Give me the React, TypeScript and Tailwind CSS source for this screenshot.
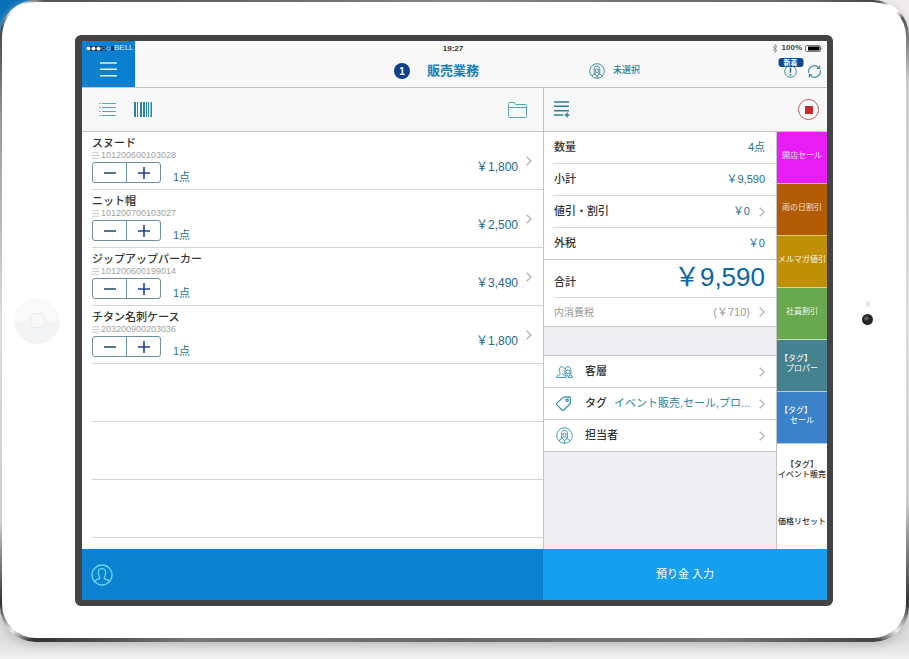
import type { ReactNode } from "react"

const items = [
  { name: "スヌード", code: "101200600103028", qty: "1点", price: "￥1,800" },
  { name: "ニット帽", code: "101200700103027", qty: "1点", price: "￥2,500" },
  { name: "ジップアップパーカー", code: "101200600199014", qty: "1点", price: "￥3,490" },
  { name: "チタン名刺ケース", code: "203200900203036", qty: "1点", price: "￥1,800" },
]

const emptyRows = [1, 2, 3]

const shortcuts = [
  { lines: ["開店セール"], color: "bg-[#e81cf5] text-white/80" },
  { lines: ["雨の日割引"], color: "bg-[#b35c06] text-white/80" },
  { lines: ["メルマガ値引"], color: "bg-[#bf9006] text-white/90" },
  { lines: ["社員割引"], color: "bg-[#68a84e] text-white/90" },
  { lines: ["【タグ】", "プロパー"], color: "bg-[#45818e] text-white", shift: true },
  { lines: ["【タグ】", "セール"], color: "bg-[#3b82c9] text-white", shift: true },
]

const plainShortcuts = [{ lines: ["【タグ】", "イベント販売"] }, { lines: ["価格リセット"] }]

function Chevron() {
  return (
    <svg className="h-3 w-[6px] shrink-0" viewBox="0 0 6 12" fill="none" stroke="#b4b4b8" strokeWidth="1.3">
      <path d="M.7 1.7 5 6 .7 10.3" />
    </svg>
  )
}

function PersonIcon({ className }: { className: string }) {
  return (
    <svg className={className} viewBox="0 0 22 22" fill="none" stroke="currentColor" strokeWidth="1.3">
      <circle cx="11" cy="11" r="10" />
      <path d="M3.5 17.5C4.300 15.800 6 15.500 7.700 14.900 8.900 14.500 9 13.900 8.600 13 7.600 11.800 7.300 10.400 7.300 8.800 7.300 6.200 8.700 4.700 11 4.700s3.700 1.500 3.700 4.100c0 1.600-.3 3-1.300 4.200-.4.9-.3 1.500.9 1.900 1.700.6 3.400.9 4.200 2.600" />
    </svg>
  )
}

function StaffIcon({ className }: { className: string }) {
  return (
    <svg className={className} viewBox="0 0 18 18" fill="none" stroke="currentColor" strokeWidth="1">
      <circle cx="9" cy="9" r="8.200" />
      <path d="M3.200 14.700c.4-1.400 1.800-1.700 3.600-2.300l.2-1.400M14.800 14.700c-.4-1.400-1.800-1.700-3.600-2.300L11 11" />
      <path d="M5.800 11.200C5.900 9.800 5.800 8.600 5.900 6.700 6 4.700 7.200 3.500 9 3.500s3 1.200 3.100 3.200c.1 1.900 0 3.100.1 4.500H11" />
      <path d="M5.800 11.200H7M7.300 7.300C7.200 9.500 7.900 11 9 11s1.800-1.500 1.700-3.700C9.700 7.300 9 7 8.600 6.400c-.3.500-.7.8-1.300.9ZM6.800 12.400 9 14.500l2.200-2.100M9 14.500V17" />
    </svg>
  )
}

function ListIcon() {
  return (
    <svg className="h-[13px] w-[17px]" viewBox="0 0 17 13" stroke="#5aa5ba" strokeWidth="1">
      <path d="M3 .5h14M3 4.500h14M3 8.500h14M3 12.500h14" />
      <path d="M0 .5h1.500M0 4.500h1.500M0 8.500h1.500M0 12.500h1.500" />
    </svg>
  )
}

function BarcodeIcon() {
  return (
    <svg className="h-[15px] w-[18px]" viewBox="0 0 18 15" fill="#2785a5">
      <path d="M0 0h2v15H0zM3 0h1v15H3zM6 0h2v15H6zM9 0h2v15H9zM12 0h1v15h-1zM14 0h1v15h-1zM16.500 0h1.500v15h-1.500z" />
    </svg>
  )
}

function FolderIcon() {
  return (
    <svg className="h-4 w-[19px]" viewBox="0 0 19 16" fill="none" stroke="#5d9fb3" strokeWidth="1">
      <path d="M.5 14V1.500c0-.6.4-1 1-1h4.700l1.300 2h9.500c.9 0 1.500.6 1.500 1.500v10c0 .8-.5 1.500-1.300 1.500H1.800C1 15.500.5 14.800.5 14ZM.5 5.500h18" />
    </svg>
  )
}

function ListPlusIcon() {
  return (
    <svg className="h-[17px] w-4" viewBox="0 0 16 17" fill="none" stroke="#2d7f98" strokeWidth="1.400">
      <path d="M0 1h15M0 5.300h15M0 9.700h15M0 14h9M10.500 14h5M13 11.500v5" />
    </svg>
  )
}

function BatteryStatus() {
  return (
    <div className="flex h-[14px] items-center justify-end text-[8px] font-bold text-[#444]">
      <svg className="mr-1 h-[9px] w-[6px]" viewBox="0 0 6 9" fill="none" stroke="#777" strokeWidth=".8">
        <path d="m.8 2.500 4.200 4L3 8.400V.6l2 1.900-4.200 4" />
      </svg>
      100%
      <svg className="ml-[3px] h-[7px] w-[18px]" viewBox="0 0 18 7">
        <rect x=".5" y=".5" width="15" height="6" rx="1.500" fill="none" stroke="#777" />
        <rect x="3" y="1.500" width="11.500" height="4" fill="#000" />
        <path d="M16.500 2.500c1 .2 1 1.800 0 2z" fill="#777" />
      </svg>
    </div>
  )
}

function Header() {
  return (
    <header className="flex h-[47px] border-b border-[#c4c4c6] bg-[#f8f8f8]">
      <div className="flex w-[53px] flex-col bg-[#0a7fd0]">
        <div className="flex h-[14px] items-center pl-1 text-[8px] text-[#d6ecfa]">
          <svg className="h-[7px] w-7" viewBox="0 0 28 7">
            <path d="M1 1h19v5H1z" fill="#0b3158" />
            <g fill="#fff">
              <circle cx="2.500" cy="3.500" r="2" />
              <circle cx="7.500" cy="3.500" r="2" />
              <circle cx="12.500" cy="3.500" r="2" />
            </g>
            <g fill="none" stroke="#8cc4ec" strokeWidth=".7">
              <circle cx="17.500" cy="3.500" r="1.700" />
              <circle cx="22.500" cy="3.500" r="1.700" />
            </g>
            <path d="M25 1h3v5h-3z" fill="#0b3158" />
          </svg>
          BELL
        </div>
        <button aria-label="メニュー" className="flex flex-1 items-center justify-center pb-[3px]">
          <svg className="h-[15px] w-[17px]" viewBox="0 0 17 15" stroke="#e3f4ff" strokeWidth="1.400">
            <path d="M0 1h17M0 7.300h17M0 13.700h17" />
          </svg>
        </button>
      </div>

      <div className="flex-1">
        <div className="h-[14px] text-center text-[8px] leading-[16px] font-bold text-[#333]">19:27</div>
        <div className="grid h-8 grid-cols-[1fr_auto_1fr] items-center">
          <span className="mr-[17px] flex size-4 items-center justify-center justify-self-end rounded-full bg-[#0d3f8a] text-[10px] font-bold text-white">
            1
          </span>
          <h1 className="text-[13px] font-bold text-[#1b7fb8]">販売業務</h1>
          <button className="ml-[110px] flex items-center gap-2 justify-self-start text-[9px] font-medium text-[#2a7f9c]">
            <StaffIcon className="size-4" />
            未選択
          </button>
        </div>
      </div>

      <div className="w-[56px] pr-1">
        <BatteryStatus />
        <div className="flex h-8 items-center justify-end gap-[11px] pr-[2px] text-[#3590a8]">
          <button aria-label="お知らせ" className="relative">
            <svg className="size-[13px]" viewBox="0 0 13 13" fill="none" stroke="currentColor">
              <circle cx="6.500" cy="6.500" r="5.800" />
              <path d="M6.500 2.800v5M6.500 8.900v1.500" stroke="#1c6f9a" strokeWidth="1.500" />
            </svg>
            <span className="absolute bottom-[11px] left-1/2 h-[9px] w-[25px] -translate-x-1/2 rounded-[3px] bg-[#15478c] text-center text-[7px] leading-[9px] font-bold text-white">
              新着
            </span>
          </button>
          <button aria-label="更新">
            <svg className="size-[13px]" viewBox="0 0 13 13" fill="none" stroke="currentColor" strokeWidth="1.100">
              <path d="M1 8.200A5.700 5.700 0 0 1 10.800 2.800M12 4.800a5.700 5.700 0 0 1-9.800 5.400" />
              <path d="M11.700.6v2.800H8.900M1.300 12.400V9.600h2.800" />
            </svg>
          </button>
        </div>
      </div>
    </header>
  )
}

function ItemRow({ item }: { item: (typeof items)[number] }) {
  return (
    <li className="flex h-[58px] justify-between border-b border-[#d5d5d5] pr-[11px]">
      <div className="pt-[5px]">
        <h2 className="text-[11px] leading-3 font-medium text-[#333]">{item.name}</h2>
        <p className="flex items-center gap-[2px] text-[9px] leading-3 text-[#a3a3a3]">
          <svg className="h-[7px] w-[7px]" viewBox="0 0 7 7" stroke="#bbb" strokeWidth=".8">
            <path d="M0 .8h7M0 3.500h7M0 6.200h7" />
          </svg>
          {item.code}
        </p>
        <div className="mt-px flex">
          <div className="flex h-[21px] w-[69px] divide-x divide-[#6d93a6] rounded-[3px] border border-[#6d8ea0]">
            <button aria-label={`${item.name}を減らす`} className="flex flex-1 items-center justify-center">
              <svg className="size-3" viewBox="0 0 12 12" stroke="#2b5468" strokeWidth="1.600">
                <path d="M0 6h12" />
              </svg>
            </button>
            <button aria-label={`${item.name}を増やす`} className="flex flex-1 items-center justify-center">
              <svg className="size-3" viewBox="0 0 12 12" stroke="#1c4690" strokeWidth="1.600">
                <path d="M0 6h12M6 0v12" />
              </svg>
            </button>
          </div>
          <span className="ml-3 pt-[7px] text-[11px] leading-4 text-[#2d7390]">{item.qty}</span>
        </div>
      </div>
      <button className="flex items-center gap-2 text-[12px] text-[#236a8e]">
        <span className="pt-3">{item.price}</span>
        <Chevron />
      </button>
    </li>
  )
}

function SummaryRow({ label, value, line, chevron }: { label: string; value: string; line: string; chevron?: boolean }) {
  return (
    <div className={`flex h-8 items-center border-b pr-[11px] text-[11px] ${line}`}>
      <dt className="flex-1 font-medium text-[#333]">{label}</dt>
      <dd className="flex items-center gap-[9px] text-[#2a6f8e]">
        {value}
        {chevron && <Chevron />}
      </dd>
    </div>
  )
}

function OptionRow({ icon, label, value }: { icon: ReactNode; label: string; value?: string }) {
  return (
    <button className="flex h-8 w-full items-center border-b border-[#c8c8cc] bg-white pr-[11px] pl-3 text-left text-[11px]">
      <span className="w-[29px] text-[#3590ae]">{icon}</span>
      <span className="font-medium text-[#333]">{label}</span>
      <span className="flex-1 pl-[7px] whitespace-nowrap text-[#2f84a3]">{value}</span>
      <Chevron />
    </button>
  )
}

function Summary() {
  return (
    <section className="flex flex-1 flex-col bg-[#eeeef2]">
      <dl className="border-b border-[#c8c8cc] bg-white">
        <div className="pl-[10px]">
          <SummaryRow label="数量" value="4点" line="border-[#d5d5d5]" />
          <SummaryRow label="小計" value="￥9,590" line="border-[#d5d5d5]" />
          <SummaryRow label="値引・割引" value="￥0" line="border-[#d5d5d5]" chevron />
        </div>
        <div className="border-b border-[#c4c4c6] pl-[10px]">
          <SummaryRow label="外税" value="￥0" line="border-transparent -mb-px" />
        </div>
        <div className="pl-[10px]">
          <div className="flex h-[38px] items-center justify-between border-b border-[#d5d5d5] pr-[11px]">
            <dt className="pt-2 text-[11px] font-medium text-[#333]">合計</dt>
            <dd className="pb-[3px] text-[26px] leading-8 text-[#0c66a6]">￥9,590</dd>
          </div>
          <div className="flex h-7 items-center justify-between pr-[11px] text-[#999]">
            <dt className="text-[10px]">内消費税</dt>
            <dd className="flex items-center gap-[9px] text-[11px]">
              (￥710)
              <Chevron />
            </dd>
          </div>
        </div>
      </dl>

      <div className="mt-7 border-t border-[#c8c8cc]">
        <OptionRow
          label="客層"
          icon={
            <svg className="h-3 w-[17px]" viewBox="0 0 17 12" fill="none" stroke="currentColor">
              <path d="M.6 11.400c0-1.900 1.400-2.200 3-2.700.9-.3.900-.9.500-1.400C2.700 5.400 2.800.8 5.800.7c1.300 0 2.200.8 2.500 1.800M.6 11.400h9.600c0-1.900-1.400-2.200-3-2.700-.7-.3-.8-.8-.4-1.400" />
              <path d="M16.400 11.400h-4c0-1.900-1.100-2.300-2.800-2.800M16.400 11.400c0-1.800-1-2.200-2.500-2.600V7.500h1.200c-.4-2.300.5-6.700-3-6.800-3.200-.1-3.100 3.900-3.300 6.800H10v1.100M9.900 4.500c1 0 1.800-.4 2.200-1 .3.600.8.9 1.500 1M13.600 4.500c0 1.500-.5 3-1.700 3s-1.800-1-1.900-2.200M11 9.200l1.200 1.300 1.700-1.500" />
            </svg>
          }
        />
        <OptionRow
          label="タグ"
          value="イベント販売,セール,プロ..."
          icon={
            <svg className="size-[15px]" viewBox="0 0 15 15" fill="none" stroke="currentColor" strokeWidth="1.200">
              <path d="M8 1.200 13.200.9c.6 0 .9.3 1 .9l.2 5c0 .5-.2.9-.5 1.200l-6 6c-.6.600-1.400.5-1.900 0L1 8.900c-.5-.6-.5-1.300 0-1.800l5.900-5.500c.3-.3.700-.4 1.100-.4Z" />
              <circle cx="11" cy="4.300" r="1.200" />
            </svg>
          }
        />
        <OptionRow label="担当者" icon={<StaffIcon className="size-[17px]" />} />
      </div>
    </section>
  )
}

function Shortcuts() {
  return (
    <nav className="w-[51px] border-l border-[#c4c4c6] bg-white text-[8px] leading-[10px] whitespace-nowrap">
      {shortcuts.map((s, i) => (
        <button key={i} className={`flex h-[52px] w-full flex-col items-center justify-center border-b border-white/60 pb-1 ${s.color}`}>
          <span className={s.shift ? "pr-3" : ""}>{s.lines[0]}</span>
          {s.lines[1] && <span>{s.lines[1]}</span>}
        </button>
      ))}
      {plainShortcuts.map((s, i) => (
        <button key={i} className="flex h-[52px] w-full flex-col items-center justify-center font-medium text-[#333]">
          {s.lines.map((line) => (
            <span key={line}>{line}</span>
          ))}
        </button>
      ))}
    </nav>
  )
}

export default function App() {
  return (
    <div className="min-h-screen bg-[linear-gradient(to_right,#0870b8_0,#0870b8_60px,transparent_60px),linear-gradient(#efebee_0,#f3f3f3_80%,#dcdcdc_97%,#f1f1f1_100%)] bg-[length:100%_80px,100%_100%] bg-no-repeat font-['Liberation_Sans','Noto_Sans_CJK_JP',sans-serif]">
      {/* Tablet body */}
      <div className="rounded-[36px] bg-[conic-gradient(#888_0deg,#666_48deg,#444_53deg,#fff_54deg,#fff_55deg,#555_56deg,#ccc_62deg,#ddd_90deg,#ccc_112deg,#333_122deg,#eee_125deg,#444_127deg,#777_140deg,#666_180deg,#777_220deg,#333_233deg,#eee_235deg,#333_238deg,#ccc_246deg,#ddd_270deg,#999_294deg,#444_303deg,#fff_305deg,#fff_306deg,#555_308deg,#888_360deg)] pt-[2px] pr-[3px] pb-1 pl-[2px] shadow-[0_3px_8px_#bbb]">
        <div className="grid grid-cols-[73px_1fr_73px] items-center rounded-[34px] bg-white pt-[33px] pb-8">
          <button
            aria-label="ホーム"
            className="ml-3 flex size-[46px] items-center justify-center rounded-full bg-linear-to-b from-[#f9f9fa] from-50% to-[#f3f4f6] to-50%"
          >
            <span className="size-[15px] rounded-[4px] border border-[#e8e9ec] bg-[#f8f8f9]" />
          </button>

          {/* Screen */}
          <main className="rounded-[6px] border-[6px] border-l-[7px] border-[#434345] bg-white">
            <Header />

            <div className="flex">
              <section className="flex-1">
                <div className="flex h-11 items-center border-b border-[#c4c4c6] bg-[#f8f8f8] pr-4 pl-[17px]">
                  <button aria-label="リスト">
                    <ListIcon />
                  </button>
                  <button aria-label="バーコード" className="ml-[18px] flex-1">
                    <BarcodeIcon />
                  </button>
                  <button aria-label="フォルダ">
                    <FolderIcon />
                  </button>
                </div>
                <ul className="pb-[11px] pl-[10px]">
                  {items.map((item) => (
                    <ItemRow key={item.code} item={item} />
                  ))}
                  {emptyRows.map((n) => (
                    <li key={n} className="h-[58px] border-b border-[#d5d5d5]" />
                  ))}
                </ul>
              </section>

              <aside className="flex w-[284px] flex-col border-l border-[#c4c4c6]">
                <div className="flex h-11 items-center justify-between border-b border-[#c4c4c6] bg-[#f8f8f8] pr-2 pl-[10px]">
                  <button aria-label="リストに追加">
                    <ListPlusIcon />
                  </button>
                  <button
                    aria-label="中止"
                    className="flex size-[21px] items-center justify-center rounded-full border border-[#c4535c] bg-white"
                  >
                    <span className="size-2 bg-[#cb2a2c]" />
                  </button>
                </div>
                <div className="flex flex-1">
                  <Summary />
                  <Shortcuts />
                </div>
              </aside>
            </div>

            <footer className="flex h-[51px]">
              <div className="flex flex-1 items-center bg-[#0a82d0] pl-[9px]">
                <button aria-label="顧客" className="text-[#6fd3f5]">
                  <PersonIcon className="size-[22px]" />
                </button>
              </div>
              <button className="w-[284px] bg-[#159fee] text-[11px] text-white">預り金 入力</button>
            </footer>
          </main>

          {/* Camera */}
          <div className="flex flex-col items-center pr-1 pb-4">
            <span className="size-[6px] rounded-full bg-[#ececec]" />
            <span className="mt-[7px] size-[11px] rounded-full bg-[radial-gradient(circle_at_40%_40%,#777_0,#222_35%,#333_100%)]" />
          </div>
        </div>
      </div>
    </div>
  )
}
